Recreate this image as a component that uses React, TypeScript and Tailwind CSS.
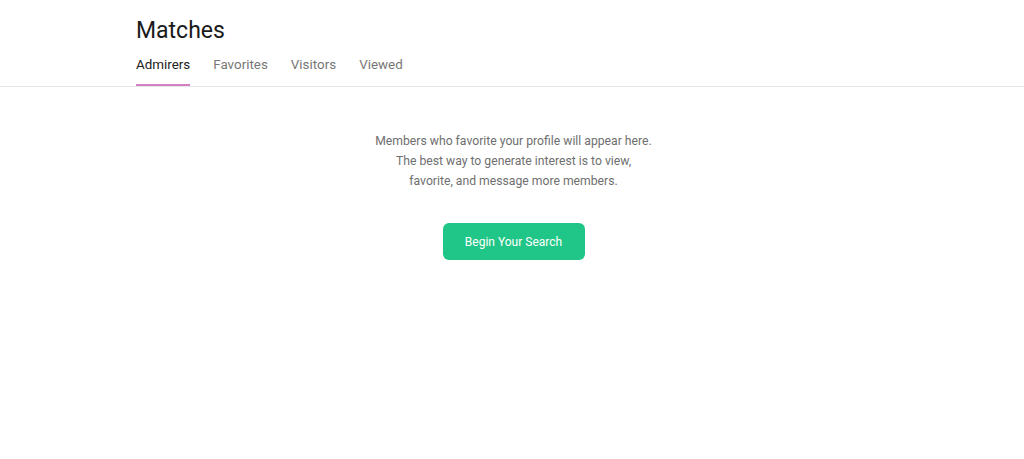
const tabs = ['Admirers', 'Favorites', 'Visitors', 'Viewed'];

export default function App() {
  return (
    <div className="min-h-[459px] bg-white font-['Roboto',sans-serif]">
      <div className="border-b border-[#e6e6e6]">
        <div className="mx-auto w-[752px]">
          <h1 className="pt-[16px] text-[23px] leading-[30px] text-[#1a1a1a]">Matches</h1>
          <nav className="mt-[10px] flex gap-[23px]">
            {tabs.map((t, i) => (
              <a
                key={t}
                href="#"
                className={
                  i === 0
                    ? 'border-b-2 border-[#d57fc4] pb-[11px] text-[13.4px] leading-[17px] text-[#222]'
                    : 'border-b-2 border-transparent pb-[11px] text-[13.4px] leading-[17px] text-[#777]'
                }
              >
                {t}
              </a>
            ))}
          </nav>
        </div>
      </div>

      <div className="ml-[3px] flex flex-col items-center pt-[44px]">
        <p className="text-center text-[12.2px] leading-[20px] text-[#6f6f6f]">
          Members who favorite your profile will appear here.
          <br />
          The best way to generate interest is to view,
          <br />
          favorite, and message more members.
        </p>
        <button className="mt-[32px] h-[37px] w-[142px] rounded-[6px] bg-[#1fc687] text-[12px] text-white">
          Begin Your Search
        </button>
      </div>
    </div>
  );
}
